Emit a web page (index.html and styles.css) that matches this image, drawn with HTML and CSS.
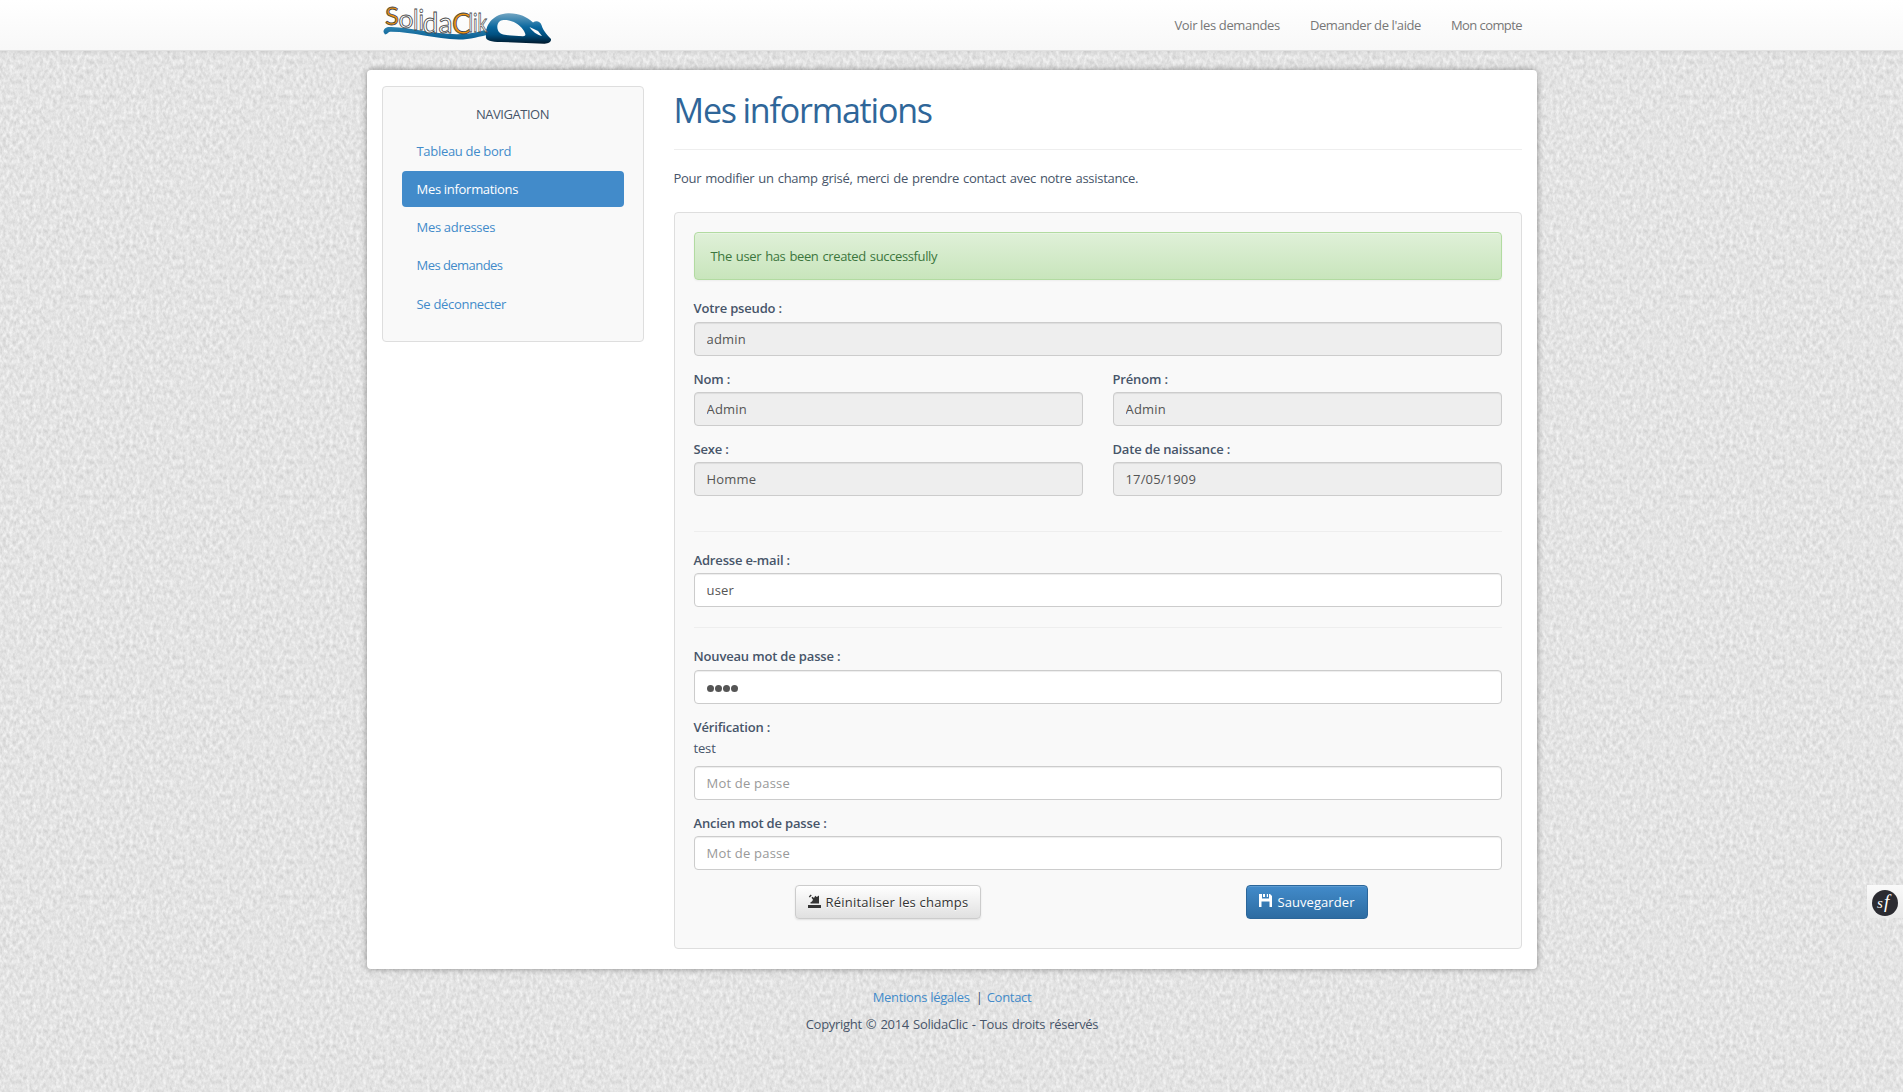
FILE: index.html
```html
<!DOCTYPE html>
<html lang="fr">
<head>
<meta charset="utf-8">
<title>Mes informations - SolidaClic</title>
<link rel="stylesheet" href="styles.css">
</head>
<body>
<header class="navbar">
  <div class="container navbar-inner">
    <svg class="logo" width="170" height="50" viewBox="0 0 170 50" role="img" aria-label="SolidaClik">
      <defs>
        <linearGradient id="tail" x1="0" y1="0" x2="0" y2="1"><stop offset="0" stop-color="#2c82b0"/><stop offset="1" stop-color="#075d91"/></linearGradient>
        <linearGradient id="mouse" x1="0" y1="0" x2="0" y2="1"><stop offset="0" stop-color="#72a5c2"/><stop offset=".45" stop-color="#0b689f"/><stop offset=".7" stop-color="#005080"/><stop offset="1" stop-color="#00182b"/></linearGradient>
      </defs>
      <path d="M1.500 32C1.500 28 5 26.500 9 27C30 27.500 50 34 75 34.200C88 34 97 32 106 29L109 34C98 36.500 88 39.500 77 39.600C52 39 30 31.500 8 31.800C6 32 5.500 34.500 3 34.500Z" fill="url(#tail)"/>
      <path fill-rule="evenodd" d="M104 36C103 25 111 14 126 13.300C137 13 145 17 151 22.500C154 20.500 158 21 159.500 25C161 31 167 37 169 39C169.500 42 166 44 162 43.700L119 42C108 42 103 40 104 36ZM115.500 25C117 20 121 19.500 127 20.500C134 22 139 26 142 31C144 35 144 36 141 36.200C130 35 120 36 117 32C115.500 30 115 27 115.500 25ZM147.500 27L156 31L160 36C155 35 150 31 147.500 27Z" fill="url(#mouse)"/>
      <g class="logo-text">
        <text class="logo-cap" x="3" y="25" font-size="25" textLength="14" lengthAdjust="spacingAndGlyphs">S</text>
        <text x="16.500" y="28" font-size="25" textLength="15" lengthAdjust="spacingAndGlyphs">o</text>
        <text x="31" y="30" font-size="28" textLength="11" lengthAdjust="spacingAndGlyphs">li</text>
        <text x="40.500" y="32.500" font-size="28" textLength="30" lengthAdjust="spacingAndGlyphs">da</text>
        <text class="logo-cap" x="70" y="33.500" font-size="28" textLength="19" lengthAdjust="spacingAndGlyphs">C</text>
        <text x="86.500" y="31.500" font-size="25" textLength="18.500" lengthAdjust="spacingAndGlyphs">lik</text>
      </g>
    </svg>
    <nav class="topnav">
      <a class="t-voir" href="#">Voir les demandes</a>
      <a class="t-aide" href="#">Demander de l'aide</a>
      <a class="t-compte" href="#">Mon compte</a>
    </nav>
  </div>
</header>

<main class="container page">
  <aside class="well sidebar">
    <div class="sidebar-title">NAVIGATION</div>
    <a href="#">Tableau de bord</a>
    <a class="active" href="#">Mes informations</a>
    <a href="#">Mes adresses</a>
    <a class="tight" href="#">Mes demandes</a>
    <a class="last" href="#">Se déconnecter</a>
  </aside>

  <section class="content">
    <h1>Mes informations</h1>
    <p class="intro">Pour modifier un champ grisé, merci de prendre contact avec notre assistance.</p>
    <form class="well form">
      <div class="alert">The user has been created successfully</div>
      <label class="field pseudo"><b>Votre pseudo :</b><input type="text" value="admin" disabled></label>
      <div class="row">
        <label class="field"><b>Nom :</b><input type="text" value="Admin" disabled></label>
        <label class="field"><b>Prénom :</b><input type="text" value="Admin" disabled></label>
      </div>
      <div class="row">
        <label class="field"><b>Sexe :</b><input type="text" value="Homme" disabled></label>
        <label class="field"><b>Date de naissance :</b><input class="date" type="text" value="17/05/1909" disabled></label>
      </div>
      <hr class="first-rule">
      <label class="field"><b>Adresse e-mail :</b><input type="text" value="user"></label>
      <hr>
      <label class="field new-pass"><b>Nouveau mot de passe :</b><span class="input"><i class="dot"></i><i class="dot"></i><i class="dot"></i><i class="dot"></i></span></label>
      <label class="field"><b>Vérification :</b><span class="note">test</span><input type="password" placeholder="Mot de passe"></label>
      <label class="field"><b>Ancien mot de passe :</b><input type="password" placeholder="Mot de passe"></label>
      <div class="row actions">
        <button class="btn btn-default" type="button">
          <svg width="13" height="14" viewBox="0 0 13 14"><path d="M0 11h13v3H0zM2.500 9.500H11V1.500L8.800 3 7.200 1.800 6 4 4.500 2.800 3.500 3.800 5 5.800 4 7.500 2.500 8.200zM.8 2.600l2-2 .9.900-2 2z"/></svg><span>Réinitaliser les champs</span>
        </button>
        <button class="btn btn-primary" type="button">
          <svg class="disk" width="13" height="13" viewBox="0 0 13 13"><path fill-rule="evenodd" d="M0 0h3v4.500h7V0h1l2 2v11h-2.500V7.500h-8V13H0zM4 0h2v3H4zM7.800 0H9v3H7.800z"/></svg><span>Sauvegarder</span>
        </button>
      </div>
    </form>
  </section>
</main>

<footer class="footer">
  <p><a href="#">Mentions légales</a><span class="sep">|</span><a href="#">Contact</a></p>
  <p class="copy">Copyright © 2014 SolidaClic - Tous droits réservés</p>
</footer>

<div class="toolbar">
  <svg width="26" height="26" viewBox="0 0 26 26"><circle cx="13" cy="13" r="13" fill="#2b2b31"/><text class="sf" x="5" y="18">s</text><text class="sf sf-f" x="12" y="18">f</text></svg>
</div>
</body>
</html>
```
FILE: styles.css
```css
* { box-sizing: border-box; }
html { height: 100%; overflow: hidden; }
body {
  margin: 0;
  min-height: 100%;
  font: 13px/20px "Open Sans", "Noto Sans", sans-serif;
  letter-spacing: -.165px;
  color: #475569;
  background: #e4e4e4 url("data:image/svg+xml,%3Csvg xmlns='http://www.w3.org/2000/svg' width='200' height='200'%3E%3Cfilter id='n' x='0' y='0' width='100%25' height='100%25' color-interpolation-filters='sRGB'%3E%3CfeTurbulence type='fractalNoise' baseFrequency='.3 .2' numOctaves='3' seed='7' stitchTiles='stitch'/%3E%3CfeColorMatrix values='.2 .03 0 0 .777 .2 .03 0 0 .777 .2 .03 0 0 .777 0 0 0 0 1'/%3E%3C/filter%3E%3Crect width='200' height='200' filter='url(%23n)'/%3E%3C/svg%3E");
}
a { color: #428bca; text-decoration: none; }
.container { width: 1170px; margin: 0 auto; }

.navbar {
  height: 51px;
  padding-left: 1px;
  border-bottom: 1px solid #e2e2e2;
  background: linear-gradient(#fff, #f8f8f8);
  box-shadow: 0 1px 5px rgba(0, 0, 0, .075);
}
.navbar-inner { display: flex; justify-content: space-between; padding: 0 15px; }
.logo { display: block; overflow: visible; }
.logo-text { font-family: Lato, sans-serif; letter-spacing: 0; fill: #fff; stroke: #454545; stroke-width: .8px; }
.logo-cap { fill: #ee920f; }
.topnav { display: flex; gap: 30px; padding-top: 15px; }
.topnav a { color: #777; white-space: nowrap; }
.t-voir { letter-spacing: -.36px; }
.t-aide { letter-spacing: -.41px; }
.t-compte { letter-spacing: -.58px; }

.page {
  display: flex;
  gap: 30px;
  align-items: flex-start;
  height: 899px;
  margin-top: 19px;
  padding: 16px 15px;
  border-radius: 4px;
  background: #fff;
  box-shadow: 0 0 6px rgba(0, 0, 0, .4);
}
.well { border: 1px solid #dedede; border-radius: 4px; background: #f9f9f9; }
.sidebar {
  display: flex;
  flex-direction: column;
  gap: 2px;
  width: 262px;
  height: 256px;
  padding: 17px 19px;
}
.sidebar-title { height: 27px; text-align: center; letter-spacing: -.47px; }
.sidebar a { height: 36px; padding: 8px 15px; border-radius: 4px; letter-spacing: -.3px; }
.sidebar a.tight { letter-spacing: -.54px; }
.sidebar a.last { padding-top: 9px; }
.sidebar a.active { background: #428bca; color: #fff; }

.content { width: 848px; }
h1 {
  height: 64px;
  margin: 0;
  padding-top: 4px;
  border-bottom: 1px solid #eee;
  font-size: 34px;
  font-weight: 400;
  line-height: 40px;
  letter-spacing: -1.2px;
  word-spacing: -1px;
  color: #2f6699;
}
.intro { margin: 18px 0 24px; letter-spacing: -.3px; word-spacing: 1px; }
.form { height: 737px; padding: 19px; }
.alert {
  height: 48px;
  margin-bottom: 18px;
  padding: 14px 16px;
  border: 1px solid #b2dba1;
  border-radius: 4px;
  background: linear-gradient(#dff0d8, #c8e5bc);
  box-shadow: inset 0 1px 0 rgba(255, 255, 255, .25), 0 1px 2px rgba(0, 0, 0, .05);
  color: #3c763d;
  line-height: 19px;
  letter-spacing: -.37px;
  word-spacing: 1px;
}
.row { display: grid; grid-template-columns: 1fr 1fr; gap: 30px; }
.field { display: flex; flex-direction: column; margin-bottom: 13px; }
.field b { margin-bottom: 3px; font-weight: 600; }
.pseudo b, .new-pass b { margin-bottom: 4px; }
.note { height: 29px; margin-top: -3px; padding-top: 1px; }
input, .input {
  display: flex;
  align-items: center;
  width: 100%;
  height: 34px;
  margin: 0;
  padding: 6px 12px;
  border: 1px solid #ccc;
  border-radius: 4px;
  background: #fff;
  box-shadow: inset 0 1px 1px rgba(0, 0, 0, .075);
  color: #555;
  font: 13px/20px "Open Sans", "Noto Sans", sans-serif;
  letter-spacing: .2px;
}
input:disabled { background: #eee; color: #555; opacity: 1; }
input.date { letter-spacing: .15px; }
input::placeholder { color: #999; opacity: 1; }
.dot { width: 7px; height: 7px; margin: 2px .5px 0; border-radius: 50%; background: #555; }
hr { width: 100%; height: 1px; margin: 7px 0 18px; border: 0; background: #eee; }
.form .field + hr { margin-top: 20px; }
.form hr.first-rule { margin: 22px 0 18px; }
.actions { padding-top: 2px; justify-items: center; }
.btn {
  display: flex;
  align-items: flex-start;
  gap: 5px;
  height: 34px;
  padding: 6px 12px;
  border: 1px solid #ccc;
  border-radius: 4px;
  font: 13px/20px "Open Sans", "Noto Sans", sans-serif;
  letter-spacing: .2px;
  white-space: nowrap;
}
.btn svg { margin-top: 2px; fill: currentColor; }
.btn-default { color: #333; background: linear-gradient(#fff, #e0e0e0); text-shadow: 0 1px 0 #fff; box-shadow: 0 1px 2px rgba(0, 0, 0, .1); }
.btn-primary { color: #fff; border-color: #2b669a; background: linear-gradient(#428bca, #2d6ca2); box-shadow: inset 0 1px 0 rgba(255, 255, 255, .15); letter-spacing: .07px; }

.footer { padding: 18px 0 0 1px; text-align: center; }
.footer p { margin: 0 0 7px; }
.footer a { letter-spacing: -.3px; }
.footer .copy { letter-spacing: -.3px; word-spacing: 1px; }
.sep { margin: 0 5px 0 6px; }
.sep + a { margin-left: -1px; }

/* floating debug toolbar toggle */
.toolbar {
  position: fixed;
  top: 885px;
  right: 0;
  width: 36px;
  height: 33px;
  padding: 5px 5px 0;
  background: linear-gradient(#fafafa, #e8e8e8);
}
.toolbar svg { display: block; }
.sf { font: italic 400 15px "Liberation Serif", serif; fill: #fff; letter-spacing: 0; }
.sf-f { font-size: 19px; }
```
